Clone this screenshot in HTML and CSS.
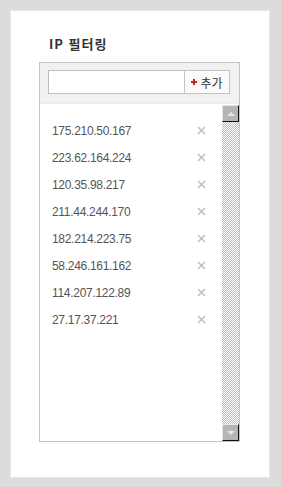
FILE: index.html
```html
<!DOCTYPE html>
<html lang="ko">

<head>
    <meta charset="UTF-8">
    <meta name="viewport" content="width=device-width, initial-scale=1.0">
    <title>IP 필터링</title>
    <link rel="stylesheet" href="styles.css">
</head>

<body>
    <div class="panel">
        <h2 class="title">IP 필터링</h2>

        <div class="filter-box">
            <div class="filter-head">
                <input type="text" class="ip-input">
                <button type="button" class="add-btn">
                    <svg class="plus" viewBox="0 0 6 6"><path d="M2 0H4V2H6V4H4V6H2V4H0V2H2Z"/></svg>추가
                </button>
            </div>

            <div class="filter-body">
                <ul class="ip-list">
                    <li><span>175.210.50.167</span><svg class="del" viewBox="0 0 9 9"><path d="M1 1L8 8M8 1L1 8"/></svg></li>
                    <li><span>223.62.164.224</span><svg class="del" viewBox="0 0 9 9"><path d="M1 1L8 8M8 1L1 8"/></svg></li>
                    <li><span>120.35.98.217</span><svg class="del" viewBox="0 0 9 9"><path d="M1 1L8 8M8 1L1 8"/></svg></li>
                    <li><span>211.44.244.170</span><svg class="del" viewBox="0 0 9 9"><path d="M1 1L8 8M8 1L1 8"/></svg></li>
                    <li><span>182.214.223.75</span><svg class="del" viewBox="0 0 9 9"><path d="M1 1L8 8M8 1L1 8"/></svg></li>
                    <li><span>58.246.161.162</span><svg class="del" viewBox="0 0 9 9"><path d="M1 1L8 8M8 1L1 8"/></svg></li>
                    <li><span>114.207.122.89</span><svg class="del" viewBox="0 0 9 9"><path d="M1 1L8 8M8 1L1 8"/></svg></li>
                    <li><span>27.17.37.221</span><svg class="del" viewBox="0 0 9 9"><path d="M1 1L8 8M8 1L1 8"/></svg></li>
                </ul>

                <div class="scrollbar">
                    <div class="sb-btn sb-up"><i></i></div>
                    <div class="sb-track"></div>
                    <div class="sb-btn sb-down"><i></i></div>
                </div>
            </div>
        </div>
    </div>
</body>

</html>
```

FILE: styles.css
```css
body {
    margin: 0;
    background-color: #dcdcdc;
    font-family: "Liberation Sans", "Noto Sans CJK KR", sans-serif;
    height: 487px;
    box-sizing: border-box;
    padding: 11px 12px 10px 11px;
}

.panel {
    background-color: #ffffff;
    height: 100%;
    padding: 25px 0 0 28px;
    box-sizing: border-box;
    box-shadow: 0 0 0 1px #e8e8e8;
}

.title {
    margin: 0 0 10px 10px;
    font-family: "Noto Sans CJK KR", sans-serif;
    font-size: 13px;
    line-height: 16px;
    font-weight: bold;
    letter-spacing: 1px;
    color: #333333;
}

.filter-box {
    width: 201px;
    height: 380px;
    border: 1px solid #c4c4c4;
    box-sizing: border-box;
    display: flex;
    flex-direction: column;
}

.filter-head {
    background-color: #f1f1f1;
    padding: 7px 0 9px 8px;
    display: flex;
    border-bottom: 1px solid #ebebeb;
}

.ip-input {
    flex: 0 0 136px;
    width: 136px;
    height: 24px;
    box-sizing: border-box;
    border: 1px solid #bdbdbd;
    border-right: none;
    margin: 0;
    padding: 0 4px;
}

.add-btn {
    flex: 0 0 46px;
    width: 46px;
    height: 24px;
    box-sizing: border-box;
    border: 1px solid #c4c4c4;
    background-color: #fbfbfb;
    margin: 0;
    padding: 0;
    font-family: "Noto Sans CJK KR", sans-serif;
    font-size: 12px;
    color: #333333;
    display: flex;
    align-items: center;
    justify-content: center;
    cursor: pointer;
}

.plus {
    width: 6px;
    height: 6px;
    fill: #d42020;
    margin-right: 3px;
    flex: none;
}

.filter-body {
    flex: 1;
    display: flex;
}

.ip-list {
    flex: 1;
    list-style: none;
    margin: 0;
    padding: 13px 16px 0 12px;
}

.ip-list li {
    height: 27px;
    display: flex;
    align-items: center;
    justify-content: space-between;
    font-size: 12px;
    letter-spacing: -0.3px;
    color: #555555;
}

.del {
    width: 9px;
    height: 9px;
    stroke: #bbbbbb;
    stroke-width: 1.4;
    fill: none;
}

.scrollbar {
    width: 17px;
    padding-top: 1px;
    display: flex;
    flex-direction: column;
}

.sb-btn {
    height: 17px;
    box-sizing: border-box;
    background-color: #b5b5b5;
    border-top: 1px solid #e6e6e6;
    border-left: 1px solid #e6e6e6;
    border-right: 1px solid #111111;
    border-bottom: 1px solid #111111;
    display: flex;
    align-items: center;
    justify-content: center;
}

.sb-btn i {
    width: 0;
    height: 0;
    border-left: 4px solid transparent;
    border-right: 4px solid transparent;
}

.sb-up i {
    border-bottom: 4px solid #e8e8e8;
}

.sb-down i {
    border-top: 4px solid #e8e8e8;
}

.sb-track {
    flex: 1;
    background-image: repeating-conic-gradient(#bcbcbc 0 25%, #ffffff 0 50%);
    background-size: 2px 2px;
}
```
